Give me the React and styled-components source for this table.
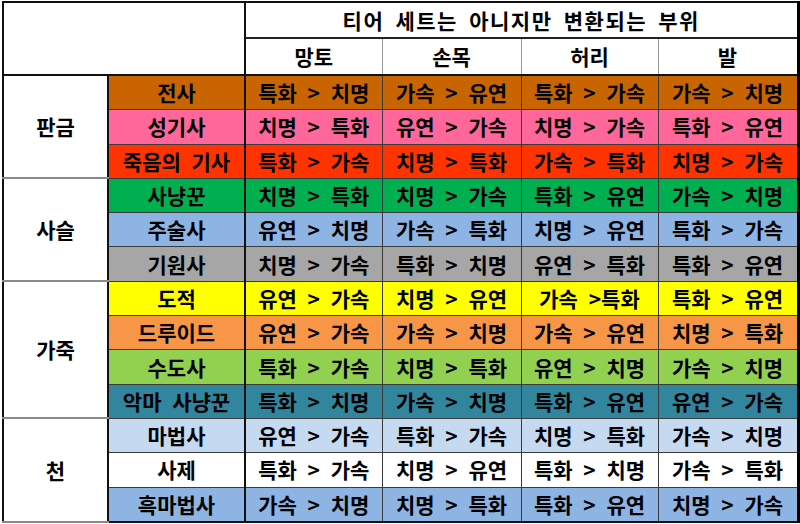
import React from "react";
import styled, { createGlobalStyle } from "styled-components";

const GlobalStyle = createGlobalStyle`
  html, body {
    margin: 0;
    padding: 0;
    background: #ffffff;
  }
  body {
    font-family: "Noto Sans CJK KR", "Noto Sans", sans-serif;
  }
`;

const Page = styled.div`
  padding: 1px 0 0 2px;
`;

const Table = styled.table`
  border-collapse: collapse;
  table-layout: fixed;
  width: 795px;
  border-top: 2px solid #111;
  border-left: 2px solid #111;
  border-right: 3px solid #000;
  border-bottom: 2px solid #111;
  font-weight: 700;
  font-size: 21px;
  color: #000;
`;

const Col = styled.col`
  width: ${(p) => p.$w}px;
`;

const Cell = styled.td`
  padding: 0;
  text-align: center;
  vertical-align: middle;
  white-space: nowrap;
  overflow: hidden;
  line-height: 1;
  word-spacing: 6px;
  background: ${(p) => p.$bg || "#ffffff"};
  border: 1px solid #3a3a3a;
`;

const Corner = styled(Cell)`
  border-right: 2px solid #111;
  border-bottom: 2px solid #111;
`;

const Title = styled(Cell)`
  height: 34px;
  border-bottom: 2px solid #222;
  word-spacing: 5px;
  letter-spacing: 1.5px;
`;

const PartHead = styled(Cell)`
  height: 35px;
  border-left: 1px solid #9a9a9a;
  border-right: 1px solid #9a9a9a;
  border-bottom: 2px solid #111;
  &:first-child {
    border-left: 2px solid #111;
  }
`;

const GroupCell = styled(Cell)`
  border-right: 2px solid #111;
  border-top: 2px solid #8a8a8a;
  border-bottom: 2px solid #8a8a8a;
`;

const ClassCell = styled(Cell)`
  height: 33.3px;
  border-right: 2px solid #111;
`;

const colWidths = [105, 137, 137, 139, 137, 140];
const parts = ["망토", "손목", "허리", "발"];

const groups = [
  {
    name: "판금",
    rows: [
      { cls: "전사", bg: "#C96500", v: ["특화 > 치명", "가속 > 유연", "특화 > 가속", "가속 > 치명"] },
      { cls: "성기사", bg: "#FF6699", v: ["치명 > 특화", "유연 > 가속", "치명 > 가속", "특화 > 유연"] },
      { cls: "죽음의 기사", bg: "#FF3300", v: ["특화 > 가속", "치명 > 특화", "가속 > 특화", "치명 > 가속"] },
    ],
  },
  {
    name: "사슬",
    rows: [
      { cls: "사냥꾼", bg: "#00B050", v: ["치명 > 특화", "치명 > 가속", "특화 > 유연", "가속 > 치명"] },
      { cls: "주술사", bg: "#8DB4E2", v: ["유연 > 치명", "가속 > 특화", "치명 > 유연", "특화 > 가속"] },
      { cls: "기원사", bg: "#A6A6A6", v: ["치명 > 가속", "특화 > 치명", "유연 > 특화", "특화 > 유연"] },
    ],
  },
  {
    name: "가죽",
    rows: [
      { cls: "도적", bg: "#FFFF00", v: ["유연 > 가속", "치명 > 유연", "가속 >특화", "특화 > 유연"] },
      { cls: "드루이드", bg: "#F79646", v: ["유연 > 가속", "가속 > 치명", "가속 > 유연", "치명 > 특화"] },
      { cls: "수도사", bg: "#92D050", v: ["특화 > 가속", "치명 > 특화", "유연 > 치명", "가속 > 치명"] },
      { cls: "악마 사냥꾼", bg: "#31859C", v: ["특화 > 치명", "가속 > 치명", "특화 > 유연", "유연 > 가속"] },
    ],
  },
  {
    name: "천",
    rows: [
      { cls: "마법사", bg: "#C5D9F1", v: ["유연 > 가속", "특화 > 가속", "치명 > 특화", "가속 > 치명"] },
      { cls: "사제", bg: "#FFFFFF", v: ["특화 > 가속", "치명 > 유연", "특화 > 치명", "가속 > 특화"] },
      { cls: "흑마법사", bg: "#8DB4E2", v: ["가속 > 치명", "치명 > 특화", "특화 > 유연", "치명 > 가속"] },
    ],
  },
];

export default function App() {
  return (
    <Page>
      <GlobalStyle />
      <Table>
        <colgroup>
          {colWidths.map((w, i) => (
            <Col key={i} $w={w} />
          ))}
        </colgroup>
        <thead>
          <tr>
            <Corner colSpan={2} rowSpan={2} />
            <Title colSpan={4}>티어 세트는 아니지만 변환되는 부위</Title>
          </tr>
          <tr>
            {parts.map((p) => (
              <PartHead key={p}>{p}</PartHead>
            ))}
          </tr>
        </thead>
        <tbody>
          {groups.map((g) =>
            g.rows.map((r, i) => (
              <tr key={r.cls}>
                {i === 0 && <GroupCell rowSpan={g.rows.length}>{g.name}</GroupCell>}
                <ClassCell $bg={r.bg}>{r.cls}</ClassCell>
                {r.v.map((val, j) => (
                  <Cell key={j} $bg={r.bg}>
                    {val}
                  </Cell>
                ))}
              </tr>
            ))
          )}
        </tbody>
      </Table>
    </Page>
  );
}
